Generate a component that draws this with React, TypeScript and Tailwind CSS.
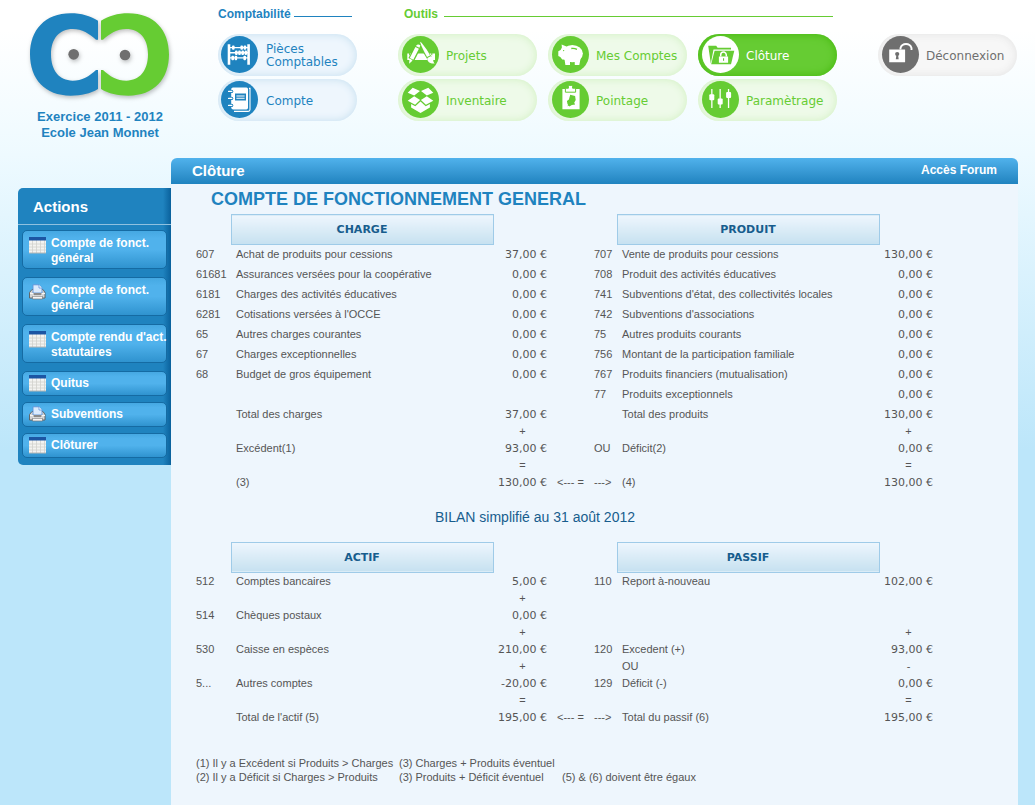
import { ReactNode } from "react";
import clsx from "clsx";

const tones = {
  blue: {
    pill: "bg-[#eef6fd] text-[#1f83bf] shadow-[inset_0_0_8px_#c3deee]",
    disc: "ml-[3px] bg-[#1f83bf] text-white",
  },
  green: {
    pill: "bg-[#eefae9] text-[#66cc33] shadow-[inset_0_0_8px_#d0f0c0]",
    disc: "ml-1 bg-[#66cc33] text-white",
  },
  active: {
    pill: "bg-[#66cc33] text-white shadow-[inset_0_0_8px_#43b80c]",
    disc: "ml-1 bg-white text-[#66cc33]",
  },
  gray: {
    pill: "bg-[#f7f7f7] text-[#6f6f6f] shadow-[inset_0_0_8px_#e2e2e2]",
    disc: "ml-1 bg-[#6f6f6f] text-white",
  },
};

type Tone = keyof typeof tones;

function NavPill({ tone, label, icon }: { tone: Tone; label: string; icon: ReactNode }) {
  return (
    <a
      href="#"
      className={clsx(
        "flex h-[42px] w-[139px] items-center rounded-full font-['DejaVu_Sans',Verdana,sans-serif] text-[12px] leading-[13px]",
        tones[tone].pill
      )}
    >
      <span className="w-12 shrink-0 pb-px">
        <svg viewBox="0 0 37 37" fill="currentColor" className={clsx("h-[37px] w-[37px] rounded-full", tones[tone].disc)}>
          {icon}
        </svg>
      </span>
      <span className="pt-[2px]">{label}</span>
    </a>
  );
}

const abacus = (
  <>
    <path d="M6.7 8.3h2.6v20.4H6.7zM26.3 8.3h2.6v20.4h-2.6z" />
    <path d="M9 11h18v1.3H9zM9 16.1h18v1.3H9zM9 21.3h18v1.3H9z" />
    <rect x="11" y="9.4" width="2.6" height="4.4" rx="1" />
    <rect x="19.4" y="9.4" width="2.6" height="4.4" rx="1" />
    <rect x="22.6" y="9.4" width="2.6" height="4.4" rx="1" />
    <rect x="14" y="14.6" width="2.6" height="4.4" rx="1" />
    <rect x="17.2" y="14.6" width="2.6" height="4.4" rx="1" />
    <rect x="20.4" y="14.6" width="2.6" height="4.4" rx="1" />
    <rect x="23.6" y="14.6" width="2.4" height="4.4" rx="1" />
    <rect x="10.4" y="19.8" width="2.6" height="4.4" rx="1" />
    <rect x="13.6" y="19.8" width="2.6" height="4.4" rx="1" />
    <rect x="22.4" y="19.8" width="2.6" height="4.4" rx="1" />
  </>
);

const notebook = (
  <>
    <path d="M12 6.4h13.4q1.6 0 1.6 1.6v18.8q0 1.6-1.6 1.6H12q-1.8 0-1.8-1.8V8.2q0-1.8 1.8-1.8z" />
    <path d="M28 7.4h1v21.2q0 1.8-1.8 1.8H13" fill="none" stroke="currentColor" strokeWidth="1.1" />
    <g fill="#1f83bf">
      <circle cx="10.6" cy="10.4" r="1.7" />
      <circle cx="10.6" cy="17.4" r="1.7" />
      <circle cx="10.6" cy="24.4" r="1.7" />
    </g>
    <g fill="none" stroke="currentColor" strokeWidth="1.3" strokeLinecap="round">
      <path d="M7.600 10.400h3.200M7.600 17.400h3.200M7.600 24.400h3.200" />
    </g>
    <path d="M14 12.6h11v6.8H14z" fill="#1f83bf" />
    <path d="M15.4 14.5h8.2v.9h-8.2zM15.4 16.8h8.2v.9h-8.2z" />
  </>
);

const tools = (
  <>
    <path d="M5.300 17.500h1.800v1.700h1v-1.700h2v1.700h1v-1.700h15.200v1.700h1v-1.700h2v1.700h1v-1.700h2.700V24H5.300z" />
    <path d="M16.300 9.800L9.300 23.400" stroke="#66cc33" strokeWidth="6.500" />
    <path d="M19 8L28 23" stroke="#66cc33" strokeWidth="5" />
    <path d="M15.100 8.800q1.800-1 3.300.8l-1 2.200-3.500-1.800zM13.400 11l3.500 1.800-5.600 11-3.500-1.800z" />
    <path d="M7.500 22.900l3.100 1.600-3.500 3.200z" />
    <path d="M18.200 5.800C19.800 6.500 26 15 28 19.400l-3 1.600C22.400 16.500 18.300 8.300 18.200 5.800z" />
    <path d="M25.400 22l3.200-1.700c2 1 2.800 2.700 2.700 4.400 0 1.200.7 2 1.500 2.800-4 .5-8-1.500-7.400-5.500z" />
  </>
);

const pig = (
  <>
    <ellipse cx="20.300" cy="17.600" rx="10.600" ry="8.700" />
    <path d="M9.600 8.500l4.900 1.900.5 13.300-4.800-.1-1.900-2.700-2-1v-4.600l2.300-1.300 1.300-2.500z" />
    <path d="M12.300 22h5.700v7h-4.600zM22.500 22h6.200l-1.400 7h-4.500z" />
    <path d="M19.300 12.500q3-.5 5.700.9" fill="none" stroke="#66cc33" strokeWidth="1.300" />
    <circle cx="11.600" cy="14.600" r="0.700" fill="#66cc33" />
  </>
);

const folderLock = (
  <>
    <path d="M6.200 9.700h8l1.400 2H29v1.800H11.500L8.800 27.500z" />
    <path d="M12.600 14.700H32.300L29 28.200H9.200z" />
    <path d="M16.900 20.400h9.200v6.400h-9.200z" fill="#fff" />
    <path d="M18.700 20.600v-1.700a2.800 2.800 0 0 1 5.600 0v1.700" fill="none" stroke="#fff" strokeWidth="1.500" />
    <path d="M21 22.200h1.100v2.600H21z" />
  </>
);

const openBox = (
  <>
    <path d="M10.700 6.700L18 10l-5.800 4.500-6.500-2.800zM26.300 6.700L19 10l5.800 4.500 6.500-2.800z" />
    <path d="M12.200 15.200l5.900 3.800-5 4.800-7.400-4zM24.800 15.200L18.900 19l5 4.800 7.400-4z" />
    <path d="M9.100 22.900l4.200 2.300 5.200-4.700 5.200 4.700 4.200-2.300v3.700l-9.400 5.400-9.400-5.400z" />
  </>
);

const clipboard = (
  <>
    <path d="M10.400 8h17.200v20.200H10.400z" />
    <path d="M13.400 7.200h3V5.600q0-1.200 1.200-1.200h1.800q1.200 0 1.200 1.200v1.600h3v4H13.400z" stroke="#66cc33" strokeWidth="1" />
    <path d="M18.200 13.800l4.900 1.200.6 4-1.500 2.800 1 1.700-3.300.5-2.700 1.500-1.700-2.400-.6-3 2-1.700z" fill="#66cc33" />
    <path d="M18 22.500l-2.200 2.600" stroke="#66cc33" strokeWidth="0.9" />
  </>
);

const sliders = (
  <>
    <path d="M9.200 8h1.300v19H9.200zM17.500 8h1.300v19h-1.300zM25.900 8h1.300v19h-1.300z" />
    <rect x="7.300" y="13.300" width="5" height="6" rx="1" />
    <rect x="15.700" y="17.600" width="5" height="6" rx="1" />
    <rect x="24.100" y="11" width="5" height="6" rx="1" />
  </>
);

const unlock = (
  <>
    <path d="M7.200 13.600h15.900v12.600H7.200z" />
    <path d="M18.500 13.600V12a5.800 5.800 0 0 1 11 0v2" fill="none" stroke="currentColor" strokeWidth="1.900" />
    <circle cx="15.200" cy="18" r="2.100" fill="#6f6f6f" />
    <path d="M14.500 18.500h1.500l.7 4.800h-2.900z" fill="#6f6f6f" />
  </>
);

function SheetIcon() {
  return (
    <svg viewBox="0 0 17 17" className="h-[17px] w-[17px]">
      <path d="M0 0h17v16H0z" fill="#f3f3f1" />
      <path d="M0 7h17M0 10h17M0 13h17M3.500 3v13M7.500 3v13M11.500 3v13M15.500 3v13" stroke="#d0d0cd" strokeWidth="0.800" />
      <path d="M0 0h17v3.500H0z" fill="#1c55a3" />
      <path d="M0 16h17" stroke="#b5b5b2" />
    </svg>
  );
}

function PrinterIcon() {
  return (
    <svg viewBox="0 0 17 17" className="h-[17px] w-[17px]">
      <path d="M3 5.500h11l2 3v5.500H.5V8.500z" fill="#d5d5d5" stroke="#5c5c5c" strokeWidth="0.900" />
      <path d="M4 9V.800h6L13 4v5z" fill="#dcebfd" stroke="#5f93d8" strokeWidth="0.900" />
      <path d="M10 .8V4h3" fill="#fff" stroke="#5f93d8" strokeWidth="0.800" />
      <path d="M1 9.500h3.500v2.500h8V9.500H16" fill="none" stroke="#f7f7f7" strokeWidth="1.200" />
      <path d="M4.500 9h8v2h-8z" fill="#8b8b8b" />
      <path d="M3.500 12.300h10v2.700h-10z" fill="#f6f6f6" stroke="#777" strokeWidth="0.700" />
    </svg>
  );
}

function Logo() {
  return (
    <svg viewBox="90 39 420 252" className="h-[84px] w-[140px] drop-shadow-[1px_2px_2px_rgba(0,0,0,0.25)]">
      <path
        d="M294 62C270 48 245 40 212 40C135 40 90 90 90 163C90 238 135 287 212 287C245 287 270 281 294 267V210H288C268 229 246 242 218 242C178 242 153 212 153 163C153 116 178 87 218 87C246 87 268 101 288 119H294Z"
        fill="#1f83bf"
      />
      <path
        d="M303 62C327 48 352 40 385 40C462 40 507 90 507 163C507 238 462 287 385 287C352 287 327 281 303 267V210H309C329 229 351 242 379 242C419 242 444 212 444 163C444 116 419 87 379 87C351 87 329 101 309 119H303Z"
        fill="#66cc33"
      />
      <circle cx="221" cy="163" r="16" fill="#6f6f6f" />
      <circle cx="375" cy="165" r="16" fill="#6f6f6f" />
    </svg>
  );
}

const actions = [
  { lines: ["Compte de fonct.", "général"], icon: "sheet" },
  { lines: ["Compte de fonct.", "général"], icon: "printer" },
  { lines: ["Compte rendu d'act.", "statutaires"], icon: "sheet" },
  { lines: ["Quitus"], icon: "sheet" },
  { lines: ["Subventions"], icon: "printer" },
  { lines: ["Clôturer"], icon: "sheet" },
];

// [code, label, amount, arrow, code, label, amount]
type Row = string[];

const fonctionnement: Row[] = [
  ["607", "Achat de produits pour cessions", "37,00 €", "", "707", "Vente de produits pour cessions", "130,00 €"],
  ["61681", "Assurances versées pour la coopérative", "0,00 €", "", "708", "Produit des activités éducatives", "0,00 €"],
  ["6181", "Charges des activités éducatives", "0,00 €", "", "741", "Subventions d'état, des collectivités locales", "0,00 €"],
  ["6281", "Cotisations versées à l'OCCE", "0,00 €", "", "742", "Subventions d'associations", "0,00 €"],
  ["65", "Autres charges courantes", "0,00 €", "", "75", "Autres produits courants", "0,00 €"],
  ["67", "Charges exceptionnelles", "0,00 €", "", "756", "Montant de la participation familiale", "0,00 €"],
  ["68", "Budget de gros équipement", "0,00 €", "", "767", "Produits financiers (mutualisation)", "0,00 €"],
  ["", "", "", "", "77", "Produits exceptionnels", "0,00 €"],
  ["", "Total des charges", "37,00 €", "", "", "Total des produits", "130,00 €"],
  ["", "", "+", "", "", "", "+"],
  ["", "Excédent(1)", "93,00 €", "", "OU", "Déficit(2)", "0,00 €"],
  ["", "", "=", "", "", "", "="],
  ["", "(3)", "130,00 €", "<--- =", "--->", "(4)", "130,00 €"],
];

const bilan: Row[] = [
  ["512", "Comptes bancaires", "5,00 €", "", "110", "Report à-nouveau", "102,00 €"],
  ["", "", "+", "", "", "", ""],
  ["514", "Chèques postaux", "0,00 €", "", "", "", ""],
  ["", "", "+", "", "", "", "+"],
  ["530", "Caisse en espèces", "210,00 €", "", "120", "Excedent (+)", "93,00 €"],
  ["", "", "+", "", "", "OU", "-"],
  ["5...", "Autres comptes", "-20,00 €", "", "129", "Déficit (-)", "0,00 €"],
  ["", "", "=", "", "", "", "="],
  ["", "Total de l'actif (5)", "195,00 €", "<--- =", "--->", "Total du passif (6)", "195,00 €"],
];

function HeadCell({ children }: { children: ReactNode }) {
  return (
    <th
      scope="col"
      className="border border-[#9fcbe8] bg-linear-to-b from-[#eef6fd] to-[#c6e1f0] p-0 pt-[2px] text-center font-['DejaVu_Sans',Verdana,sans-serif] text-[11px] font-bold text-[#175d8d]"
    >
      {children}
    </th>
  );
}

function AccountTable({ left, right, rows }: { left: string; right: string; rows: Row[] }) {
  return (
    <table className="w-[747px] table-fixed border-collapse text-left">
      <colgroup>
        <col className="w-[40px]" />
        <col className="w-[262px]" />
        <col className="w-[59px]" />
        <col className="w-[37px]" />
        <col className="w-[28px]" />
        <col className="w-[262px]" />
        <col className="w-[59px]" />
      </colgroup>
      <thead>
        <tr className="h-[30px]">
          <td />
          <HeadCell>{left}</HeadCell>
          <td colSpan={3} />
          <HeadCell>{right}</HeadCell>
          <td />
        </tr>
      </thead>
      <tbody>
        {rows.map((row, i) => {
          const isSign = row[2].length === 1;
          return (
            <tr key={i} className={isSign ? "h-[14px]" : "h-5"}>
              {row.map((cell, j) => {
                const isAmount = (j === 2 || j === 6) && !isSign;
                return (
                  <td
                    key={j}
                    className={clsx(
                      "whitespace-nowrap px-[5px] py-0",
                      isAmount ? "text-right font-['DejaVu_Sans',Verdana,sans-serif] leading-[14px]" : "pb-[2px] leading-3",
                      isSign && (j === 2 || j === 6) && "text-center"
                    )}
                  >
                    {cell}
                  </td>
                );
              })}
            </tr>
          );
        })}
      </tbody>
    </table>
  );
}

export default function App() {
  return (
    <div className="flex min-h-screen flex-col bg-[linear-gradient(to_bottom,#fff_0,#fff_30px,#eefaff_155px,#bce6fa_450px)] font-['Liberation_Sans',Arial,sans-serif] text-[11px] text-[#555]">
      <header className="flex h-[158px]">
        <div className="flex w-[200px] flex-col items-center pt-[13px]">
          <Logo />
          <p className="mt-3 text-center text-[13px] font-bold leading-4 text-[#1f83bf]">
            Exercice 2011 - 2012
            <br />
            Ecole Jean Monnet
          </p>
        </div>
        <nav className="flex gap-[41px] pl-[18px] pt-[6px]">
          <section>
            <div className="flex h-7 w-[134px] gap-[3px] text-[#1f83bf]">
              <h2 className="text-[12px] font-bold leading-4">Comptabilité</h2>
              <span className="mt-[10px] h-px flex-1 bg-[#1f83bf]" />
            </div>
            <div className="grid gap-[3px]">
              <NavPill tone="blue" label="Pièces Comptables" icon={abacus} />
              <NavPill tone="blue" label="Compte" icon={notebook} />
            </div>
          </section>
          <section>
            <div className="flex h-7 gap-[6px] pl-[6px] pr-1 text-[#66cc33]">
              <h2 className="text-[12px] font-bold leading-4">Outils</h2>
              <span className="mt-[10px] h-px flex-1 bg-[#66cc33]" />
            </div>
            <div className="grid grid-cols-3 gap-x-[11px] gap-y-[3px]">
              <NavPill tone="green" label="Projets" icon={tools} />
              <NavPill tone="green" label="Mes Comptes" icon={pig} />
              <NavPill tone="active" label="Clôture" icon={folderLock} />
              <NavPill tone="green" label="Inventaire" icon={openBox} />
              <NavPill tone="green" label="Pointage" icon={clipboard} />
              <NavPill tone="green" label="Paramètrage" icon={sliders} />
            </div>
          </section>
          <section className="pt-7">
            <NavPill tone="gray" label="Déconnexion" icon={unlock} />
          </section>
        </nav>
      </header>

      <div className="flex flex-1 pl-[18px] pr-[17px]">
        <aside className="mt-[30px] w-[153px] shrink-0 self-start rounded-l-[5px] bg-[#1f83bf] bg-[linear-gradient(to_left,#0a619c_0,#1f83bf_8px)] pb-px text-white">
          <h2 className="border-b border-[#8fc1df] pl-[15px] pt-[2px] text-[15px] font-bold leading-[34px]">Actions</h2>
          <ul className="pl-1 pt-[5px]">
            {actions.map((a, i) => {
              const tall = a.lines.length > 1;
              return (
                <li key={i} className={tall ? "mb-2" : "mb-[6px]"}>
                  <a
                    href="#"
                    className={clsx(
                      "flex w-[145px] gap-[5px] rounded-[5px] border border-[#156ba3] bg-[linear-gradient(to_bottom,#45a8e2_0,#50b2ec_20%,#50b2ec_50%,#2f93cf_100%)] pl-[6px] text-[12px] font-bold leading-[15px]",
                      tall ? "h-[39px] pt-[5px]" : "h-[25px] items-center"
                    )}
                  >
                    <span className={clsx("shrink-0", tall && "pt-px")}>
                      {a.icon === "sheet" ? <SheetIcon /> : <PrinterIcon />}
                    </span>
                    <span className="whitespace-nowrap">
                      {a.lines.map((line) => (
                        <span key={line} className="block">
                          {line}
                        </span>
                      ))}
                    </span>
                  </a>
                </li>
              );
            })}
          </ul>
        </aside>

        <main className="min-w-0 flex-1 rounded-t-[6px] bg-[#eef6fd]">
          <div className="flex h-[26px] items-center justify-between rounded-t-[6px] bg-linear-to-b from-[#50b2ec] to-[#1f83bf] pl-[21px] pr-[21px] text-white">
            <h1 className="text-[15px] font-bold">Clôture</h1>
            <a href="#" className="pb-[2px] text-[12px] font-bold">
              Accès Forum
            </a>
          </div>
          <div className="pb-5 pl-5">
            <h2 className="pl-5 text-[18px] font-bold leading-[30px] text-[#1f83bf]">COMPTE DE FONCTIONNEMENT GENERAL</h2>
            <AccountTable left="CHARGE" right="PRODUIT" rows={fonctionnement} />
            <p className="w-[688px] text-center text-[14px] leading-[49px] text-[#175d8d]">BILAN simplifié au 31 août 2012</p>
            <AccountTable left="ACTIF" right="PASSIF" rows={bilan} />
            <div className="mt-7 grid grid-cols-[203px_163px_auto] pl-[5px] leading-[14px]">
              <span>(1) Il y a Excédent si Produits &gt; Charges</span>
              <span>(3) Charges + Produits éventuel</span>
              <span />
              <span>(2) Il y a Déficit si Charges &gt; Produits</span>
              <span>(3) Produits + Déficit éventuel</span>
              <span>(5) &amp; (6) doivent être égaux</span>
            </div>
          </div>
        </main>
      </div>
    </div>
  );
}
